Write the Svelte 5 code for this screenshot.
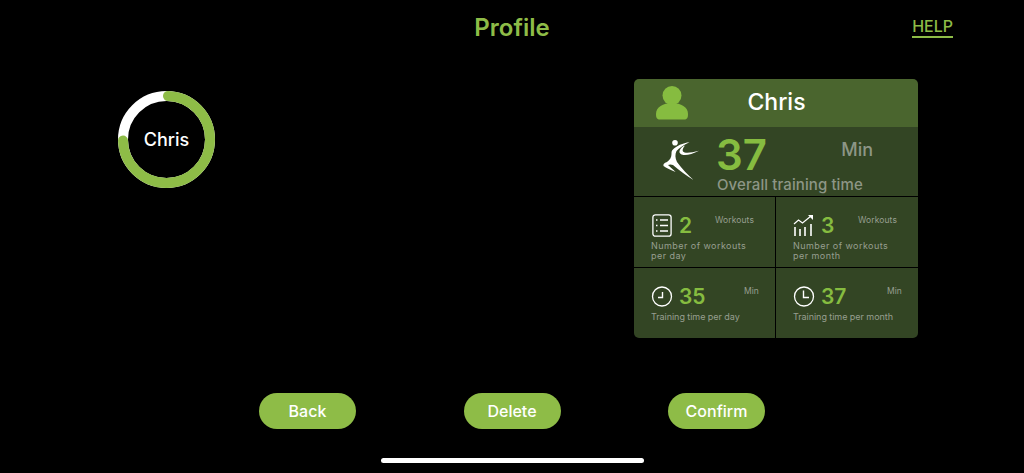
<script>
  const stats = [
    { icon: 'list', value: 2, unit: 'Workouts', label: 'Number of workouts\nper day' },
    { icon: 'chart', value: 3, unit: 'Workouts', label: 'Number of workouts\nper month' },
    { icon: 'clock-day', value: 35, unit: 'Min', label: 'Training time per day' },
    { icon: 'clock-month', value: 37, unit: 'Min', label: 'Training time per month' }
  ];
</script>

<div class="page">
  <header class="top">
    <h1>Profile</h1>
    <span class="help">HELP</span>
  </header>

  <main class="content">
    <div class="ring">
      <svg viewBox="0 0 97 97" width="97" height="97" aria-hidden="true">
        <circle cx="48.500" cy="48.500" r="43.500" fill="none" stroke="#fff" stroke-width="10" />
        <path d="M50 5 A43.500 43.500 0 1 1 5 49.500" fill="none" stroke="#8ebc47" stroke-width="10" stroke-linecap="round" />
      </svg>
      <span class="ring-name">Chris</span>
    </div>

    <section class="card">
      <div class="card-head">
        <svg class="avatar" viewBox="0 0 34 36" width="34" height="36" aria-hidden="true">
          <circle cx="17" cy="10.500" r="9.500" fill="#86bc40" />
          <path d="M1 29 C1 22 8 18 17 18 C26 18 33 22 33 29 C33 33 32 34.500 29 34.500 H5 C2 34.500 1 33 1 29 Z" fill="#86bc40" />
        </svg>
        <span>Chris</span>
      </div>

      <div class="hero">
        <svg class="runner" viewBox="0 0 44 44" width="44" height="44" aria-hidden="true">
          <circle cx="15" cy="3.700" r="2.800" fill="#fff" />
          <path d="M12.500 11 C16 7 23 4 29.500 3.300 C24 6 19 9 16.500 12 C15 15 15 19 17 23 C22 30 28 36 33.500 41 C27 37 19 31 13 26 C11 25 9 25.500 8 26 C10 28 13 30 15.500 33 C11 31 6 29 3.500 27 C3 25 4 24 7 23 C10 21 11.500 18 11.500 15 C11.500 13 11.500 12 12.500 11 Z" fill="#fff" />
          <path d="M19.500 12 C20.500 9 22.500 7.500 25 6.500 C23 9 22 11 23 12.500 C24.500 14.500 31 14 39 11.800 C33 15 27 16.500 23.500 16 C20.500 15.500 19 14 19.500 12 Z" fill="#fff" />
        </svg>
        <div class="hero-text">
          <div class="hero-row">
            <span class="hero-value">37</span>
            <span class="hero-unit">Min</span>
          </div>
          <div class="hero-label">Overall training time</div>
        </div>
      </div>

      <div class="grid">
        {#each stats as s}
          <div class="cell">
            <div class="cell-row">
              <svg class="cell-icon" viewBox="0 0 22 23" width="22" height="23" aria-hidden="true">
                {#if s.icon === 'list'}
                  <rect x="1.900" y="0.800" width="18.200" height="21.400" rx="2.500" fill="none" stroke="#fff" stroke-width="1.300" />
                  <path d="M5 6 H6.500 M9 6 H17 M5 11.500 H6.500 M9 11.500 H17 M5 17 H6.500 M9 17 H17" stroke="#fff" stroke-width="1.500" fill="none" />
                {:else if s.icon === 'chart'}
                  <path d="M1 10 L5.500 6 L9.500 9 L18 2" fill="none" stroke="#fff" stroke-width="1.200" />
                  <path d="M15 1 H20 V6 Z" fill="#fff" />
                  <path d="M2 13 V22 M7 15 V22 M12 13 V22 M18 10 V22" stroke="#fff" stroke-width="1.600" fill="none" />
                {:else if s.icon === 'clock-day'}
                  <circle cx="11" cy="11.500" r="9.500" fill="none" stroke="#fff" stroke-width="1.300" />
                  <path d="M11.500 7 V12.500 H7" fill="none" stroke="#fff" stroke-width="1.400" />
                {:else}
                  <circle cx="11" cy="11.500" r="9.500" fill="none" stroke="#fff" stroke-width="1.300" />
                  <path d="M10.500 5.500 V12.500 H16" fill="none" stroke="#fff" stroke-width="1.400" />
                {/if}
              </svg>
              <span class="cell-value">{s.value}</span>
              <span class="cell-unit" class:wide={s.unit === 'Workouts'}>{s.unit}</span>
            </div>
            <div class="cell-label" class:tight={s.unit === 'Min'}>{s.label}</div>
          </div>
        {/each}
      </div>
    </section>
  </main>

  <footer class="actions">
    <button>Back</button>
    <button>Delete</button>
    <button>Confirm</button>
  </footer>

  <div class="home-bar"></div>
</div>

<style>
  :global(body) {
    margin: 0;
    background: #000;
  }
  .page {
    width: 1024px;
    height: 473px;
    overflow: hidden;
    background: #000;
    font-family: Inter, 'Noto Sans', sans-serif;
    display: flex;
    flex-direction: column;
  }
  .top {
    height: 54px;
    display: grid;
    grid-template-columns: 1fr auto 1fr;
    align-items: center;
    padding: 0 71px;
  }
  h1 {
    grid-column: 2;
    margin: 0;
    font-size: 24px;
    font-weight: 600;
    color: #8ebc47;
  }
  .help {
    grid-column: 3;
    justify-self: end;
    font-size: 16px;
    font-weight: 500;
    line-height: 20px;
    color: #8ebc47;
    border-bottom: 2px solid #8ebc47;
  }
  .content {
    flex: 1;
    display: flex;
    justify-content: space-between;
    align-items: flex-start;
    padding: 25px 106px 0 118px;
  }
  .ring {
    position: relative;
    width: 97px;
    height: 97px;
    margin-top: 12px;
  }
  .ring svg {
    display: block;
  }
  .ring-name {
    position: absolute;
    inset: 0;
    display: flex;
    align-items: center;
    justify-content: center;
    color: #fff;
    font-size: 18px;
    font-weight: 500;
  }
  .card {
    width: 284px;
    height: 259px;
    border-radius: 5px;
    overflow: hidden;
    background: #000;
    display: flex;
    flex-direction: column;
  }
  .card-head {
    height: 48px;
    flex: none;
    box-sizing: border-box;
    padding: 0 0 2px 1px;
    background: #4a652e;
    position: relative;
    display: flex;
    align-items: center;
    justify-content: center;
    color: #fff;
    font-size: 23px;
    font-weight: 500;
  }
  .avatar {
    position: absolute;
    left: 21px;
    top: 6px;
  }
  .hero {
    height: 69px;
    flex: none;
    background: #334524;
    display: flex;
    align-items: flex-start;
    box-sizing: border-box;
    padding-left: 26px;
  }
  .runner {
    margin-top: 12px;
    flex: none;
  }
  .hero-text {
    margin-left: 13px;
    flex: 1;
  }
  .hero-row {
    display: flex;
    align-items: flex-start;
    height: 48px;
  }
  .hero-value {
    margin: 8px 0 0 -1px;
    font-size: 42px;
    line-height: 40px;
    font-weight: 600;
    color: #86bc40;
  }
  .hero-unit {
    margin-left: auto;
    margin-right: 45px;
    margin-top: 12px;
    font-size: 18px;
    line-height: 22px;
    font-weight: 500;
    color: #8d9686;
  }
  .hero-label {
    margin-top: 1px;
    font-size: 15px;
    line-height: 18px;
    font-weight: 500;
    letter-spacing: 0.1px;
    color: #8d9686;
  }
  .grid {
    flex: 1;
    display: grid;
    grid-template-columns: 141px 142px;
    grid-template-rows: 70px 70px;
    gap: 1px;
    padding-top: 1px;
  }
  .cell {
    background: #334524;
    padding: 15px 16px 0 17px;
  }
  .cell-row {
    display: flex;
    align-items: center;
    height: 26px;
  }
  .cell-icon {
    flex: none;
  }
  .cell-value {
    margin-left: 6px;
    font-size: 21px;
    font-weight: 600;
    color: #86bc40;
  }
  .cell-unit {
    margin-left: auto;
    align-self: flex-start;
    margin-top: 2px;
    font-size: 8.500px;
    line-height: 12px;
    letter-spacing: 0.1px;
    color: #979f90;
  }
  .cell-unit.wide {
    margin-right: 5px;
  }
  .cell-label {
    margin-top: 3px;
    font-size: 9px;
    line-height: 9.500px;
    letter-spacing: 0.45px;
    white-space: pre;
    color: #979f90;
  }
  .cell-label.tight {
    letter-spacing: -0.05px;
  }
  .actions {
    display: flex;
    gap: 107.500px;
    padding-left: 259px;
    margin-bottom: 29px;
  }
  button {
    width: 97px;
    height: 36px;
    border: 0;
    padding: 0;
    border-radius: 18px;
    background: #8ebc47;
    color: #fff;
    font: 500 16px Inter, 'Noto Sans', sans-serif;
  }
  .home-bar {
    width: 263px;
    height: 5px;
    border-radius: 3px;
    background: #fff;
    margin: 0 auto 10px;
  }
</style>
